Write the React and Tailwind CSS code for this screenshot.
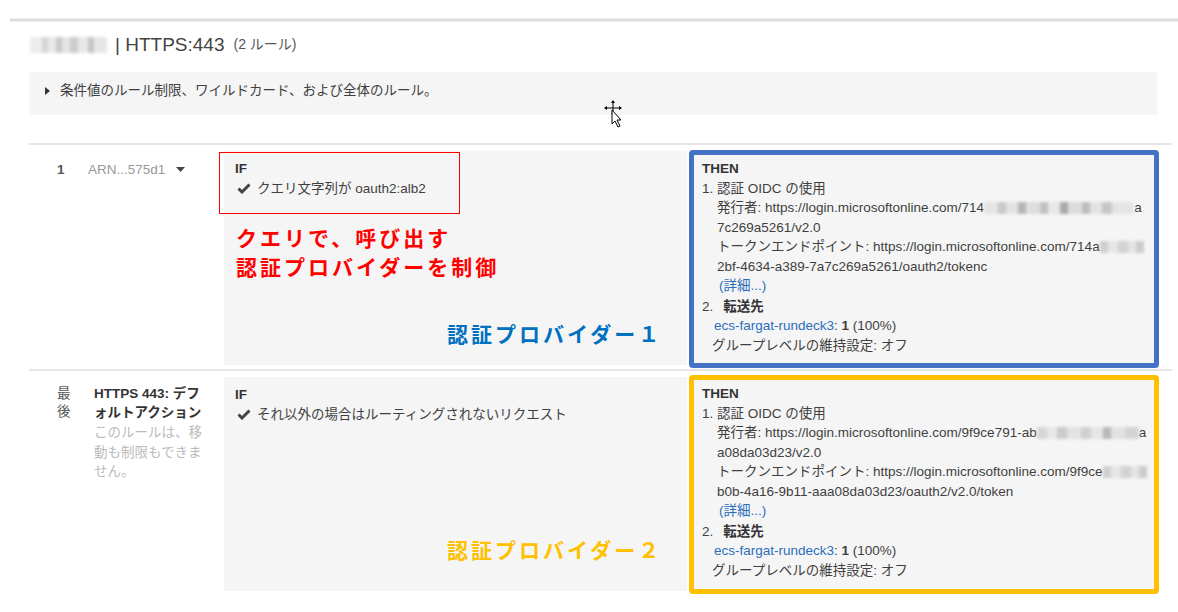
import React from "react";

function Check() {
  return (
    <svg width="14" height="11" viewBox="0 0 14 11" className="ml-[2px] mr-[6px] shrink-0">
      <path d="M1.5 5.5 L5 9 L12.5 1.5" fill="none" stroke="#444" strokeWidth="3" />
    </svg>
  );
}

function BlurA() {
  return (
    <span className="inline-block align-middle h-[12px] w-[150px] blur-[1.5px] bg-[linear-gradient(90deg,#e4e4e4_0px,#e4e4e4_14px,#c9c9c9_14px,#c9c9c9_22px,#e2e2e2_22px,#e2e2e2_34px,#b5b5b5_34px,#b5b5b5_42px,#dedede_42px,#dedede_56px,#c2c2c2_56px,#c2c2c2_64px,#e6e6e6_64px,#e6e6e6_76px,#a9a9a9_76px,#a9a9a9_84px,#dcdcdc_84px,#dcdcdc_98px,#bdbdbd_98px,#bdbdbd_106px,#e3e3e3_106px,#e3e3e3_118px,#c6c6c6_118px,#c6c6c6_128px,#e5e5e5_128px,#e5e5e5_150px)]" />
  );
}

function BlurB() {
  return (
    <span className="inline-block align-middle h-[12px] w-[44px] blur-[1.5px] bg-[linear-gradient(90deg,#cfcfcf_0px,#cfcfcf_8px,#e6e6e6_8px,#e6e6e6_18px,#d2d2d2_18px,#d2d2d2_28px,#e4e4e4_28px,#e4e4e4_36px,#cccccc_36px,#cccccc_44px)]" />
  );
}

function BlurC() {
  return (
    <span className="inline-block align-middle h-[12px] w-[102px] blur-[1.5px] bg-[linear-gradient(90deg,#d6d6d6_0px,#d6d6d6_10px,#e8e8e8_10px,#e8e8e8_20px,#cbcbcb_20px,#cbcbcb_30px,#e3e3e3_30px,#e3e3e3_44px,#d0d0d0_44px,#d0d0d0_54px,#e6e6e6_54px,#e6e6e6_66px,#b9b9b9_66px,#b9b9b9_74px,#e2e2e2_74px,#e2e2e2_88px,#d4d4d4_88px,#d4d4d4_102px)]" />
  );
}

function Then({ border, issuer, issuerTail, tokenLine, blurIssuer, blurToken, mt, h, issuer2, token2 }) {
  return (
    <div className={`${mt} ${h} ${border} ml-[2px] w-[470px] rounded-[4px] border-[5px] bg-[#f5f5f5] pt-[4px] pl-[8px]`}>
      <div className="font-bold text-[#333]">THEN</div>
      <div>1. 認証 OIDC の使用</div>
      <div className="pl-[15px] whitespace-nowrap">
        発行者: {issuer}
        {blurIssuer}
        {issuerTail}
      </div>
      <div className="pl-[15px]">{issuer2}</div>
      <div className="pl-[15px] whitespace-nowrap">
        トークンエンドポイント: {tokenLine}
        {blurToken}
      </div>
      <div className="pl-[15px] whitespace-nowrap">{token2}</div>
      <div className="pl-[17px] text-[#2a6ebb]">(詳細...)</div>
      <div className="mt-[1px]">
        2.<span className="ml-[10px] font-bold text-[#333]">転送先</span>
      </div>
      <div className="pl-[12px]">
        <span className="text-[#2a6ebb]">ecs-fargat-rundeck3</span>: <span className="font-bold">1</span> (100%)
      </div>
      <div className="pl-[10px]">グループレベルの維持設定: オフ</div>
    </div>
  );
}

export default function App() {
  return (
    <div className="relative w-[1178px] h-[612px] overflow-hidden bg-white text-[13.5px] leading-[19.5px] text-[#3f3f3f] font-['Liberation_Sans','Noto_Sans_CJK_JP',sans-serif]">
      <div className="pt-[18px] ml-[10px]">
        <div className="h-[1px] bg-[#efefef]" />
        <div className="h-[2px] bg-[#dcdcdc]" />
        <div className="h-[1px] bg-[#f0f0f0]" />
      </div>

      <div className="ml-[29px] mr-[6px]">
        <div className="mt-[11px] flex items-center h-[24px]">
          <span className="ml-[1px] inline-block h-[16px] w-[77px] blur-[1.5px] bg-[linear-gradient(90deg,#ececec_0px,#ececec_12px,#d6d6d6_12px,#d6d6d6_18px,#e9e9e9_18px,#e9e9e9_26px,#c9c9c9_26px,#c9c9c9_32px,#e4e4e4_32px,#e4e4e4_40px,#cdcdcd_40px,#cdcdcd_48px,#e8e8e8_48px,#e8e8e8_58px,#c6c6c6_58px,#c6c6c6_64px,#e6e6e6_64px,#e6e6e6_77px)]" />
          <span className="ml-[8px] text-[19px] leading-[24px] text-[#444]">| HTTPS:443</span>
          <span className="ml-[9px] text-[14px] text-[#555]">(2 ルール)</span>
        </div>

        <div className="mt-[15px] mr-[15px] h-[43px] bg-[#f5f5f5] pt-[9px] pl-[16px] flex items-start">
          <svg width="5" height="8" viewBox="0 0 5 8" className="mt-[6px] shrink-0">
            <path d="M0 0 L5 4 L0 8 Z" fill="#333" />
          </svg>
          <span className="ml-[10px]">条件値のルール制限、ワイルドカード、および全体のルール。</span>
        </div>

        <div className="mt-[28px] h-[2px] bg-[#e6e6e6]" />

        {/* Row 1 */}
        <div className="flex items-start h-[224px]">
          <div className="w-[59px] pl-[28px] pt-[15px] font-bold text-[#555]">1</div>
          <div className="w-[136px] pt-[15px] flex items-center text-[#999]">
            <span>ARN...575d1</span>
            <svg width="9" height="5" viewBox="0 0 9 5" className="ml-[11px]">
              <path d="M0 0 L9 0 L4.5 5 Z" fill="#444" />
            </svg>
          </div>
          <div className="relative mt-[6px] h-[214px] w-[463px] bg-[#f5f5f5] pt-[8px] pl-[11px] flex flex-col">
            <div className="absolute left-[-5px] top-[1px] w-[241px] h-[62px] border border-[#ff0000]" />
            <div className="font-bold text-[#333]">IF</div>
            <div className="flex items-center">
              <Check />
              <span>クエリ文字列が oauth2:alb2</span>
            </div>
            <div className="mt-[25px] pl-[1px] text-[21px] leading-[29px] tracking-[3px] font-bold text-[#ff0000] font-['Noto_Sans_CJK_JP',sans-serif]">
              <div>クエリで、呼び出す</div>
              <div>認証プロバイダーを制御</div>
            </div>
            <div className="mt-auto mb-[17px] pl-[212px] text-[21px] leading-[29px] tracking-[3px] font-bold text-[#0070c0] font-['Noto_Sans_CJK_JP',sans-serif]">
              認証プロバイダー１
            </div>
          </div>
          <Then
            mt="mt-[5px]"
            h="h-[218px]"
            border="border-[#4472c4]"
            issuer="https://login.microsoftonline.com/714"
            blurIssuer={<BlurA />}
            issuerTail="a"
            issuer2="7c269a5261/v2.0"
            tokenLine="https://login.microsoftonline.com/714a"
            blurToken={<BlurB />}
            token2="2bf-4634-a389-7a7c269a5261/oauth2/tokenc"
          />
        </div>

        <div className="h-[2px] bg-[#e6e6e6]" />

        {/* Row 2 */}
        <div className="flex items-start h-[230px]">
          <div className="w-[65px] pl-[28px] pt-[14px] leading-[18px] text-[#555]">
            <div>最</div>
            <div>後</div>
          </div>
          <div className="w-[130px] pt-[14px]">
            <div className="font-bold text-[#333] leading-[18px]">HTTPS 443: デフ</div>
            <div className="font-bold text-[#333] leading-[20px]">ォルトアクション</div>
            <div className="text-[#bbb]">このルールは、移</div>
            <div className="text-[#bbb]">動も制限もできま</div>
            <div className="text-[#bbb]">せん。</div>
          </div>
          <div className="mt-[6px] h-[214px] w-[463px] bg-[#f5f5f5] pt-[8px] pl-[11px] flex flex-col">
            <div className="font-bold text-[#333]">IF</div>
            <div className="flex items-center">
              <Check />
              <span>それ以外の場合はルーティングされないリクエスト</span>
            </div>
            <div className="mt-auto mb-[27px] pl-[212px] text-[21px] leading-[29px] tracking-[3px] font-bold text-[#ffc000] font-['Noto_Sans_CJK_JP',sans-serif]">
              認証プロバイダー２
            </div>
          </div>
          <Then
            mt="mt-[4px]"
            h="h-[219px]"
            border="border-[#ffc000]"
            issuer="https://login.microsoftonline.com/9f9ce791-ab"
            blurIssuer={<BlurC />}
            issuerTail="a"
            issuer2="a08da03d23/v2.0"
            tokenLine="https://login.microsoftonline.com/9f9ce"
            blurToken={<BlurB />}
            token2="b0b-4a16-9b11-aaa08da03d23/oauth2/v2.0/token"
          />
        </div>
      </div>

      <svg width="24" height="30" viewBox="0 0 24 30" className="absolute left-[603px] top-[99px]">
        <line x1="10" y1="3" x2="10" y2="15" stroke="#000" strokeWidth="1" />
        <line x1="3" y1="9" x2="17" y2="9" stroke="#000" strokeWidth="1" />
        <path d="M10 1 L8 4 L12 4 Z" fill="#000" />
        <path d="M1 9 L4 7 L4 11 Z" fill="#000" />
        <path d="M19 9 L16 7 L16 11 Z" fill="#000" />
        <path d="M10 17 L8 14 L12 14 Z" fill="#000" />
        <path d="M9 11 L9 25 L12 22 L15 28 L17 27 L14 21 L18 21 Z" fill="#fff" stroke="#000" strokeWidth="1" />
      </svg>
    </div>
  );
}
